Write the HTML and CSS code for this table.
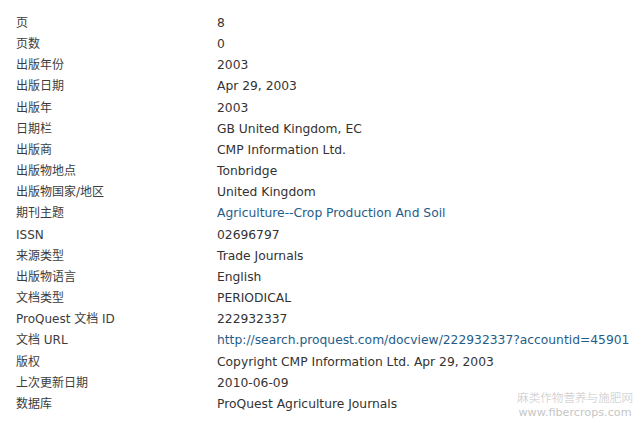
FILE: index.html
```html
<!DOCTYPE html>
<html lang="zh">
<head>
<meta charset="utf-8">
<link rel="stylesheet" href="styles.css">
</head>
<body>
<div class="details">
  <div class="label">页</div><div class="value">8</div>
  <div class="label">页数</div><div class="value">0</div>
  <div class="label">出版年份</div><div class="value">2003</div>
  <div class="label">出版日期</div><div class="value">Apr 29, 2003</div>
  <div class="label">出版年</div><div class="value">2003</div>
  <div class="label">日期栏</div><div class="value">GB United Kingdom, EC</div>
  <div class="label">出版商</div><div class="value">CMP Information Ltd.</div>
  <div class="label">出版物地点</div><div class="value">Tonbridge</div>
  <div class="label">出版物国家/地区</div><div class="value">United Kingdom</div>
  <div class="label">期刊主题</div><div class="value"><a class="link" href="#">Agriculture--Crop Production And Soil</a></div>
  <div class="label">ISSN</div><div class="value">02696797</div>
  <div class="label">来源类型</div><div class="value">Trade Journals</div>
  <div class="label">出版物语言</div><div class="value">English</div>
  <div class="label">文档类型</div><div class="value">PERIODICAL</div>
  <div class="label">ProQuest 文档 ID</div><div class="value">222932337</div>
  <div class="label">文档 URL</div><div class="value"><a class="link" href="#">http://search.proquest.com/docview/222932337?accountid=45901</a></div>
  <div class="label">版权</div><div class="value">Copyright CMP Information Ltd. Apr 29, 2003</div>
  <div class="label">上次更新日期</div><div class="value">2010-06-09</div>
  <div class="label">数据库</div><div class="value">ProQuest Agriculture Journals</div>
</div>
<div class="watermark">
  <div class="wm-cn">麻类作物营养与施肥网</div>
  <div class="wm-en">www.fibercrops.com</div>
</div>
</body>
</html>
```
FILE: styles.css
```css
html, body {
  margin: 0;
  padding: 0;
  background: #fff;
}
body {
  position: relative;
  width: 640px;
  height: 422px;
  overflow: hidden;
  font-family: "DejaVu Sans", "Noto Sans CJK SC", sans-serif;
  font-size: 12.3px;
  color: #333;
}
.details {
  display: grid;
  grid-template-columns: 201px 1fr;
  padding: 13px 0 0 16px;
  line-height: 21.15px;
}
.label {
  white-space: nowrap;
  color: #3c3c3c;
  font-size: 12px;
}
.value {
  white-space: nowrap;
}
.link {
  color: #1f5d8a;
  text-decoration: none;
}
.watermark {
  position: absolute;
  right: 7px;
  top: 389px;
  color: #c6c6c6;
  text-align: center;
}
.wm-cn {
  font-family: "Noto Sans CJK SC", sans-serif;
  font-weight: 300;
  font-size: 11.6px;
  line-height: 17px;
}
.wm-en {
  font-family: "DejaVu Sans", sans-serif;
  font-size: 11.2px;
  line-height: 13px;
}
```
